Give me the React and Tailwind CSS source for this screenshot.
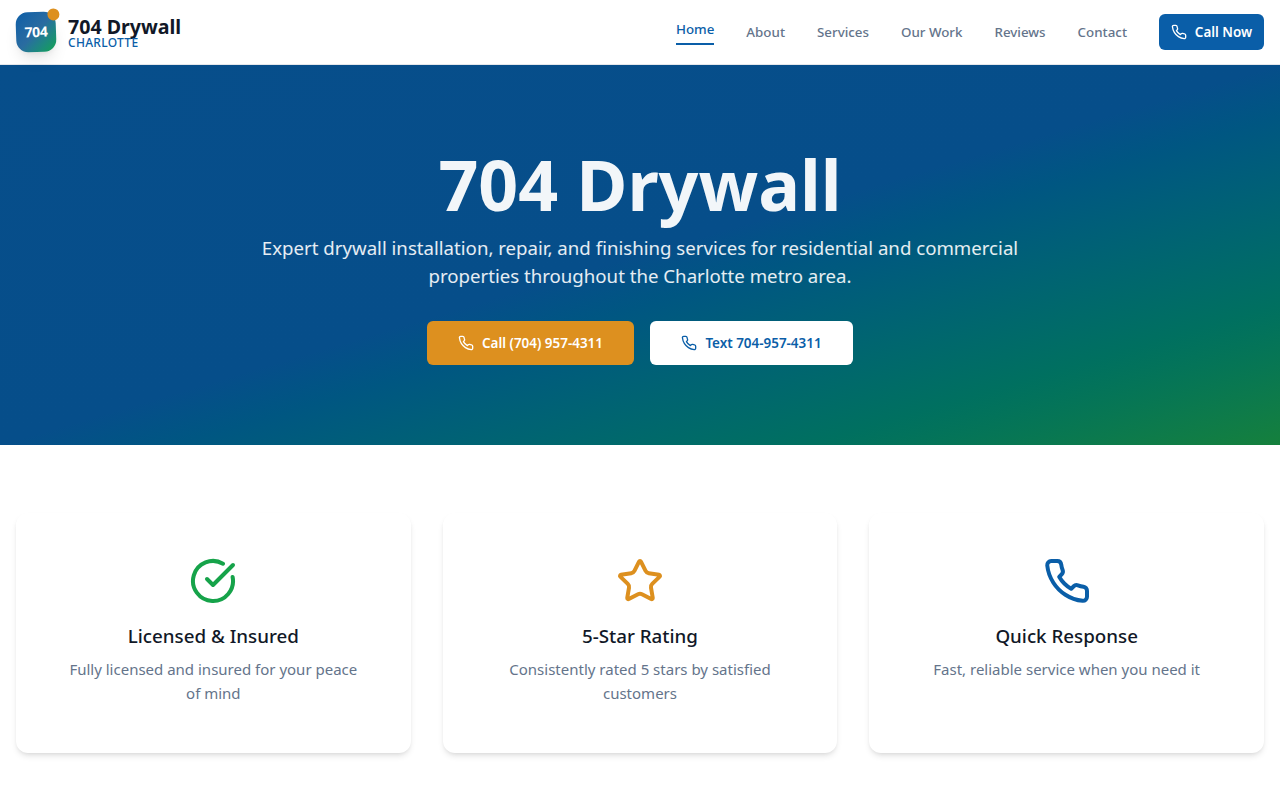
import React from "react";

const PhoneIcon = ({ className }) => (
  <svg className={className} viewBox="0 0 24 24" fill="none" stroke="currentColor" strokeWidth="2" strokeLinecap="round" strokeLinejoin="round">
    <path d="M22 16.92v3a2 2 0 0 1-2.18 2 19.79 19.79 0 0 1-8.63-3.07 19.5 19.5 0 0 1-6-6 19.79 19.79 0 0 1-3.07-8.67A2 2 0 0 1 4.11 2h3a2 2 0 0 1 2 1.72 12.84 12.84 0 0 0 .7 2.81 2 2 0 0 1-.45 2.11L8.09 9.91a16 16 0 0 0 6 6l1.27-1.27a2 2 0 0 1 2.11-.45 12.84 12.84 0 0 0 2.81.7A2 2 0 0 1 22 16.92z" />
  </svg>
);
const CheckIcon = ({ className }) => (
  <svg className={className} viewBox="0 0 24 24" fill="none" stroke="currentColor" strokeWidth="2" strokeLinecap="round" strokeLinejoin="round">
    <path d="M21.801 10A10 10 0 1 1 17 3.335" />
    <path d="m9 11 3 3L22 4" />
  </svg>
);
const StarIcon = ({ className }) => (
  <svg className={className} viewBox="0 0 24 24" fill="none" stroke="currentColor" strokeWidth="2" strokeLinecap="round" strokeLinejoin="round">
    <path d="M11.525 2.295a.53.53 0 0 1 .95 0l2.31 4.679a2.123 2.123 0 0 0 1.595 1.16l5.166.756a.53.53 0 0 1 .294.904l-3.736 3.638a2.123 2.123 0 0 0-.611 1.878l.882 5.14a.53.53 0 0 1-.771.56l-4.618-2.428a2.122 2.122 0 0 0-1.973 0L6.396 21.01a.53.53 0 0 1-.77-.56l.881-5.139a2.122 2.122 0 0 0-.611-1.879L2.16 9.795a.53.53 0 0 1 .294-.906l5.165-.755a2.122 2.122 0 0 0 1.597-1.16z" />
  </svg>
);

const links = ["About", "Services", "Our Work", "Reviews", "Contact"];
const cards = [
  { icon: <CheckIcon className="w-12 h-12 text-[#16a34a]" />, title: "Licensed & Insured", text: "Fully licensed and insured for your peace of mind" },
  { icon: <StarIcon className="w-12 h-12 text-[#dd901f]" />, title: "5-Star Rating", text: "Consistently rated 5 stars by satisfied customers" },
  { icon: <PhoneIcon className="w-12 h-12 text-[#0a5ea8]" />, title: "Quick Response", text: "Fast, reliable service when you need it" },
];

export default function App() {
  return (
    <div className="min-h-[800px] bg-white font-['Noto_Sans','Open_Sans',sans-serif] overflow-hidden">
      <header className="h-[65px] bg-white border-b border-[#e5e7eb] px-4 flex items-center justify-between">
        <div className="flex items-center gap-3">
          <div className="relative w-10 h-10 rounded-xl -rotate-2 bg-gradient-to-br from-[#0a5ea8] via-[#2a6ca0] to-[#16a34a] shadow-lg flex items-center justify-center">
            <span className="text-white text-sm font-bold tracking-tight">704</span>
            <span className="absolute -top-[3px] -right-1 w-3 h-3 rounded-full bg-[#dd901f]" />
          </div>
          <div className="flex flex-col mt-0.5">
            <span className="text-[19.6px] leading-5 font-bold text-[#111827]">704 Drywall</span>
            <span className="text-xs leading-3 font-medium text-[#0a5ea8] tracking-wide">CHARLOTTE</span>
          </div>
        </div>
        <nav className="flex items-center gap-8">
          <span className="text-[13.35px] leading-5 font-medium text-[#0a5ea8] pb-1 border-b-2 border-[#0a5ea8]">Home</span>
          {links.map((l) => (
            <span key={l} className="text-[13.35px] leading-5 font-medium text-[#64748b]">{l}</span>
          ))}
          <span className="w-[105px] h-9 rounded-md bg-[#0a5ea8] text-white text-[13.44px] font-semibold flex items-center justify-center gap-2">
            <PhoneIcon className="w-4 h-4" />
            Call Now
          </span>
        </nav>
      </header>

      <section className="h-[380px] bg-gradient-to-br from-[#074e8b] via-[#064e8a] via-50% to-[#15803c] flex flex-col items-center justify-center text-center">
        <h1 className="text-[69.8px] leading-[72px] font-bold text-white/95 mt-[3px] mb-[14px]">704 Drywall</h1>
        <p className="w-[768px] text-[18.65px] leading-7 text-white/90 mb-[31px]">
          Expert drywall installation, repair, and finishing services for residential and commercial properties throughout the Charlotte metro area.
        </p>
        <div className="flex gap-4">
          <span className="w-[207px] h-11 rounded-md bg-[#dd901f] text-white text-[13.44px] font-semibold flex items-center justify-center gap-2">
            <PhoneIcon className="w-4 h-4" />
            Call (704) 957-4311
          </span>
          <span className="w-[203px] h-11 rounded-md bg-white text-[#0a5ea8] text-[13.44px] font-semibold flex items-center justify-center gap-2">
            <PhoneIcon className="w-4 h-4" />
            Text 704-957-4311
          </span>
        </div>
      </section>

      <section className="px-4 pt-[68px] grid grid-cols-3 gap-8">
        {cards.map((c) => (
          <div key={c.title} className="h-[240px] rounded-xl bg-white shadow-md p-8 flex flex-col items-center text-center">
            <div className="mt-3 mb-[17px]">{c.icon}</div>
            <h3 className="text-[18.75px] leading-7 font-medium text-[#111827] mb-[7px]">{c.title}</h3>
            <p className="max-w-[300px] text-[15px] leading-6 text-[#64748b]">{c.text}</p>
          </div>
        ))}
      </section>
    </div>
  );
}
